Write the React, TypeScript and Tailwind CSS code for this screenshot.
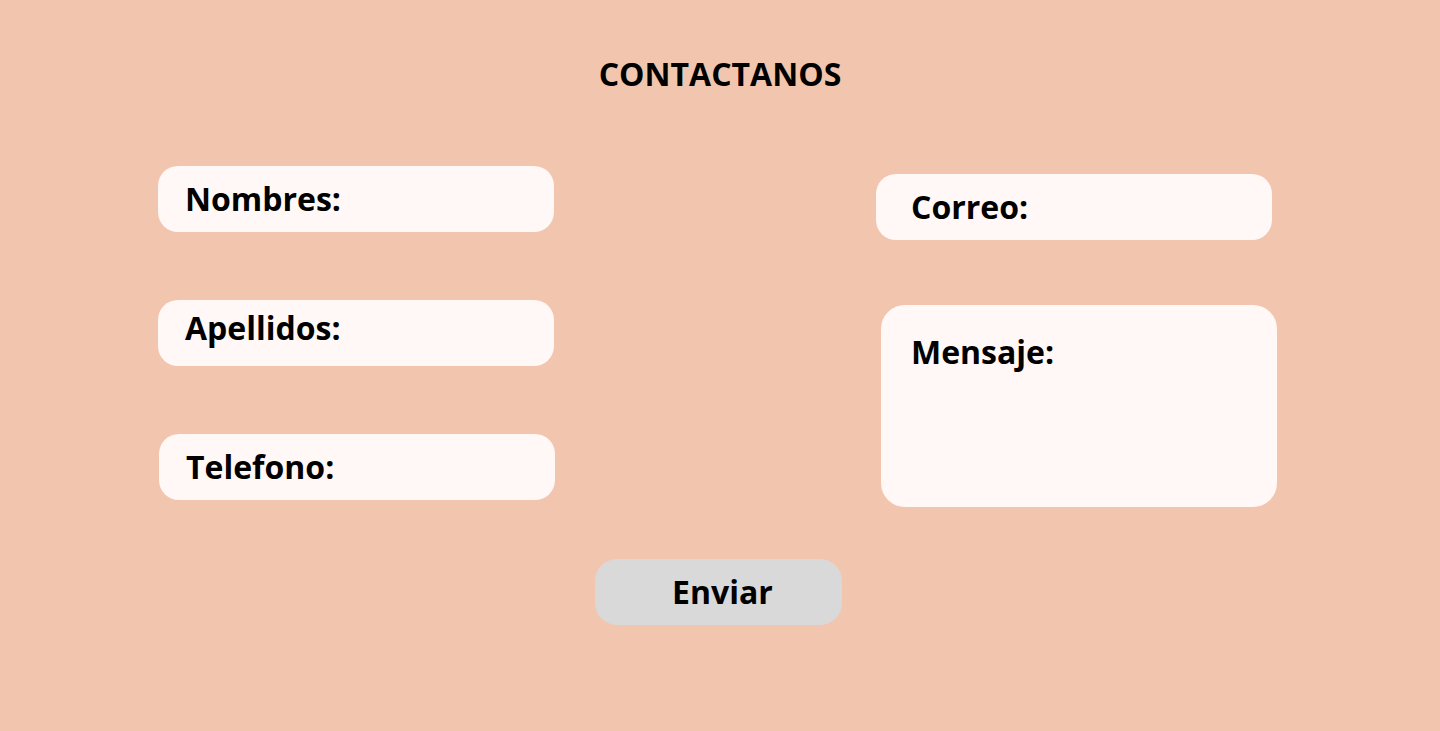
type FieldProps = {
  label: string;
  className?: string;
};

function Field({ label, className = "" }: FieldProps) {
  return (
    <div
      className={`w-[396px] h-[66px] bg-[#fff8f7] rounded-[20px] flex items-center ${className}`}
    >
      <span className="text-[32px] leading-[40px] font-bold text-black">
        {label}
      </span>
    </div>
  );
}

function App() {
  return (
    <div
      className="w-full h-[731px] bg-[#f2c6ae] flex flex-col"
      style={{ fontFamily: '"Open Sans", "Liberation Sans", sans-serif' }}
    >
      <h1 className="pt-[54px] text-center text-[32px] leading-[40px] font-bold text-black">
        CONTACTANOS
      </h1>

      <div className="flex items-start pl-[158px]">
        <div className="flex flex-col gap-[68px] mt-[72px]">
          <Field label="Nombres:" className="pl-[27px]" />
          <Field label="Apellidos:" className="pl-[27px] pb-[10px]" />
          <Field label="Telefono:" className="pl-[27px] ml-px" />
        </div>

        <div className="flex flex-col gap-[65px] mt-[80px] ml-[321px]">
          <Field label="Correo:" className="pl-[35px]" />
          <div className="ml-[5px] w-[396px] h-[202px] bg-[#fff8f7] rounded-[24px] pl-[30px] pt-[27px]">
            <span className="text-[32px] leading-[40px] font-bold text-black">
              Mensaje:
            </span>
          </div>
        </div>
      </div>

      <div className="flex justify-center mt-[52px] mr-[3px]">
        <button className="w-[247px] h-[66px] bg-[#d9d9d9] rounded-[22px] text-[32px] leading-[40px] font-bold text-black pl-[8px]">
          Enviar
        </button>
      </div>
    </div>
  );
}

export default App;
